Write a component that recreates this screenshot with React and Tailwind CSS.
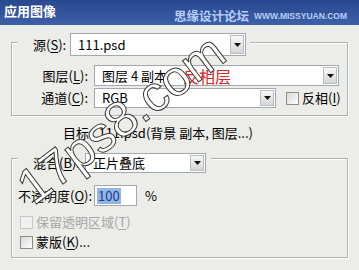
import React from "react";

const cjk = "font-['Noto_Sans_CJK_SC','Noto_Sans',sans-serif]";

function Arrow() {
  return (
    <div className="ml-auto mr-[1px] flex h-[calc(100%-2px)] w-[14px] items-center justify-center border border-[#b9bcc2] bg-linear-to-b from-[#f8f8f8] to-[#d6d6d6]">
      <svg width="7" height="4" viewBox="0 0 7 4">
        <path d="M0 0h7L3.5 4z" fill="#111" />
      </svg>
    </div>
  );
}

function Select({ className, children }) {
  return (
    <div className={`flex items-center border border-[#a3a7ae] bg-white ${className}`}>
      <span className="pl-[7px] text-[13px] leading-[16px] text-black">{children}</span>
      <Arrow />
    </div>
  );
}

function Check({ disabled }) {
  return (
    <div
      className={
        disabled
          ? "h-[13px] w-[13px] border border-[#c6c6c6] bg-[#f1f1f1]"
          : "h-[13px] w-[13px] border border-[#8d8d8d] bg-linear-to-br from-[#d9d9d9] to-white"
      }
    />
  );
}

function U({ children }) {
  return <span className="underline underline-offset-2">{children}</span>;
}

export default function App() {
  return (
    <div className={`relative h-[270px] w-[359px] overflow-hidden bg-[#ecece9] text-[13px] leading-[16px] text-black ${cjk}`}>
      {/* title bar */}
      <div className="flex h-[25px] justify-between bg-linear-to-b from-[#28488f] to-[#3e60a9]">
        <div className="pl-[4px] pt-[3px] text-[13px] font-bold leading-[16px] text-white">应用图像</div>
        <div className="flex items-center pr-[12px] pt-[6px]">
          <span className="text-[12.5px] font-bold leading-[15px] text-[#b8cdf6]">思缘设计论坛</span>
          <span className="ml-[5px] font-['Liberation_Sans',sans-serif] text-[8.5px] font-bold leading-[10px] text-[#b8cdf6]">
            WWW.MISSYUAN.COM
          </span>
        </div>
      </div>

      <div className="px-[11px]">
        {/* source group */}
        <div className="mt-[17px] border border-[#aeb0b8] pb-[7px] shadow-[inset_1px_1px_0_#fff,1px_1px_0_#fff]">
          <div className="-mt-[10px] ml-[6px] flex h-[23px] w-[232px] items-center bg-[#ecece9] pl-[15px]">
            <span className="w-[37px]">
              源(<U>S</U>):
            </span>
            <Select className="h-[23px] w-[176px]">111.psd</Select>
          </div>

          <div className="mt-[9px] flex items-center">
            <span className="w-[76px] text-right">
              图层(<U>L</U>):
            </span>
            <div className="relative ml-[6px]">
              <Select className="h-[21px] w-[245px]">图层 4 副本</Select>
              <div className="absolute left-[89px] top-0 flex h-full items-center text-[16px] text-[#d6262b]">反相层</div>
            </div>
          </div>

          <div className="mt-[2px] flex items-center">
            <span className="w-[76px] text-right">
              通道(<U>C</U>):
            </span>
            <Select className="ml-[6px] h-[20px] w-[182px]">RGB</Select>
            <div className="ml-[10px]">
              <Check />
            </div>
            <span className="ml-[3px]">
              反相(<U>I</U>)
            </span>
          </div>
        </div>

        <div className="mt-[9px] h-[16px] whitespace-nowrap pl-[52px]">目标:&nbsp; 111.psd(背景 副本, 图层...)</div>

        {/* blending group */}
        <div className="mt-[17px] border border-[#aeb0b8] pb-[7px] shadow-[inset_1px_1px_0_#fff,1px_1px_0_#fff]">
          <div className="-mt-[6px] ml-[6px] flex h-[20px] w-[193px] items-center bg-[#ecece9] pl-[15px]">
            <span className="w-[52px]">
              混合(<U>B</U>):
            </span>
            <Select className="h-[20px] w-[121px]">正片叠底</Select>
          </div>

          <div className="mt-[12px] flex items-center pl-[6px]">
            <span className="w-[76px]">
              不透明度(<U>O</U>):
            </span>
            <div className="flex h-[21px] w-[43px] items-center border border-[#a3a7ae] bg-white pl-[2px]">
              <span className="bg-[#93b4e6] px-[1px] text-[#1d3c8c]">100</span>
            </div>
            <span className="ml-[8px]">%</span>
          </div>

          <div className="mt-[8px] flex h-[16px] items-center pl-[8px]">
            <Check disabled />
            <span className="ml-[3px] text-[#a7a7a7]">
              保留透明区域(<U>T</U>)
            </span>
          </div>

          <div className="mt-[4px] flex h-[16px] items-center pl-[8px]">
            <Check />
            <span className="ml-[3px]">
              蒙版(<U>K</U>)...
            </span>
          </div>
        </div>
      </div>

      {/* watermark */}
      <div className="pointer-events-none absolute left-[121px] top-[119px] -translate-x-1/2 -translate-y-1/2 rotate-[-37deg] whitespace-nowrap font-['Liberation_Sans',sans-serif] text-[50px] font-normal leading-none text-white [-webkit-text-stroke:1px_#3a3a3a]">
        17ps8.com
      </div>
    </div>
  );
}
